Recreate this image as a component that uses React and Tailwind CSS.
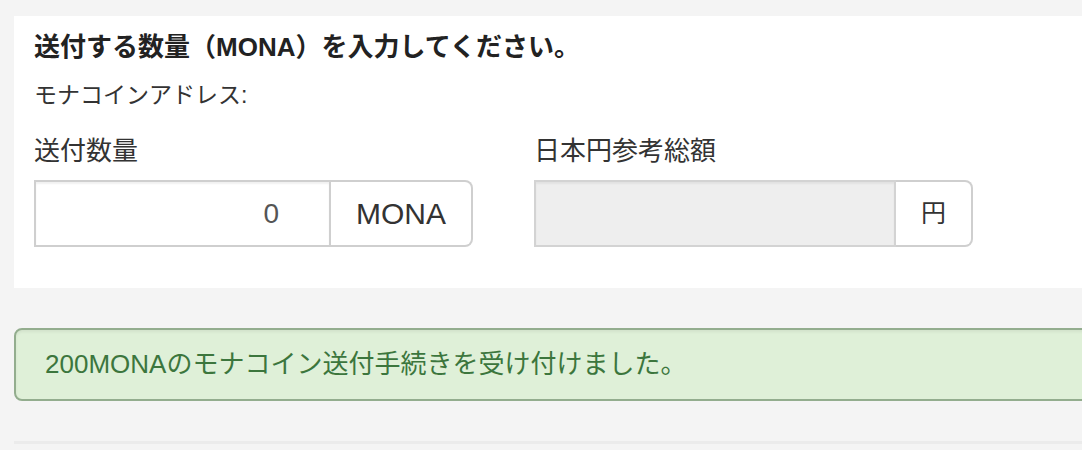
export default function App() {
    const font = { fontFamily: '"Liberation Sans", "Noto Sans CJK JP", sans-serif' };

    return (
        <div className="w-[1082px] h-[450px] overflow-hidden bg-[#f4f4f4]" style={font}>
            <div className="w-[1110px] pl-[14px] pt-[16px]">
                <div className="bg-white pl-[20px] pt-[13px] pb-[41px]">
                    <h2 className="text-[26px] leading-[36px] font-bold text-[#222]">
                        送付する数量（MONA）を入力してください。
                    </h2>
                    <p className="mt-[13px] text-[23px] leading-[34px] text-[#333]">モナコインアドレス:</p>

                    <div className="mt-[21px] flex gap-[61px]">
                        <div className="w-[439px]">
                            <label className="block text-[26px] leading-[36px] text-[#333]">送付数量</label>
                            <div className="mt-[11px] flex h-[67px]">
                                <input
                                    type="text"
                                    readOnly
                                    value="0"
                                    className="flex-1 min-w-0 border-2 border-[#cfcfcf] bg-white pr-[50px] text-right text-[28px] text-[#555] shadow-[inset_0_2px_2px_rgba(0,0,0,0.06)] outline-none"
                                    style={font}
                                />
                                <span className="flex items-center border-2 border-l-0 border-[#cfcfcf] rounded-r-[8px] px-[25px] text-[30px] text-[#333]">
                                    MONA
                                </span>
                            </div>
                        </div>

                        <div className="w-[439px]">
                            <label className="block text-[26px] leading-[36px] text-[#333]">日本円参考総額</label>
                            <div className="mt-[11px] flex h-[67px]">
                                <div className="flex-1 border-2 border-[#d3d3d3] bg-[#eeeeee] shadow-[inset_0_2px_2px_rgba(0,0,0,0.05)]"></div>
                                <span className="flex items-center border-2 border-l-0 border-[#cfcfcf] rounded-r-[8px] px-[25px] text-[25px] text-[#333]">
                                    円
                                </span>
                            </div>
                        </div>
                    </div>
                </div>

                <div className="mt-[40px] h-[73px] flex items-center rounded-[8px] border-2 border-[#93ad8e] bg-[#dff0d8] pl-[29px] text-[26px] text-[#3c763d] shadow-[inset_0_2px_3px_rgba(0,0,0,0.06)]">
                    200MONAのモナコイン送付手続きを受け付けました。
                </div>

                <div className="mt-[40px] h-[3px] bg-[#ebebeb]"></div>
            </div>
        </div>
    );
}
